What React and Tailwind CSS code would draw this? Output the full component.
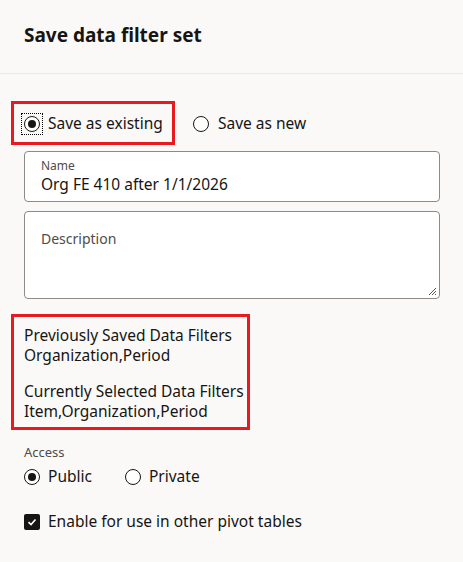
import React from "react";

function Radio({ checked, focus }) {
  return (
    <span className={focus ? "flex items-center justify-center w-[20px] h-[20px] outline-1 outline-dotted outline-black" : "flex items-center justify-center w-[20px] h-[20px]"}>
      <span className="flex items-center justify-center w-[16px] h-[16px] rounded-full border-[1.5px] border-[#161513] bg-white">
        {checked && <span className="w-[8px] h-[8px] rounded-full bg-[#161513]" />}
      </span>
    </span>
  );
}

export default function App() {
  return (
    <div className="w-[463px] h-[562px] bg-[#fbf9f8] text-[#161513] font-['Noto_Sans',sans-serif] whitespace-nowrap">
      <div className="h-[74px] border-b border-[#ebe9e6] px-6 flex items-center">
        <h1 className="text-[19px] font-bold leading-none -mt-[2px]">Save data filter set</h1>
      </div>
      <div className="pl-[11px] pr-[23px] pt-[27px]">
        <div className="flex items-center">
          <div className="flex items-center gap-[6px] border-[3px] border-[#e8191f] h-[44px] w-[164px] pl-[8px] pt-[2px]">
            <Radio checked focus />
            <span className="text-[15.5px]">Save as existing</span>
          </div>
          <div className="flex items-center gap-[7px] ml-[16px] pt-[2px]">
            <Radio />
            <span className="text-[15.5px]">Save as new</span>
          </div>
        </div>
        <div className="ml-[13px] mt-[6px] h-[51px] rounded-[4px] border border-[#8e8b87] bg-white px-4 pt-[6px]">
          <div className="text-[12px] leading-[16px] text-[#4f4c48]">Name</div>
          <div className="text-[15.5px] leading-[20px]">Org FE 410 after 1/1/2026</div>
        </div>
        <div className="relative ml-[13px] mt-[9px] h-[88px] rounded-[4px] border border-[#8e8b87] bg-white px-4 pt-[18px]">
          <div className="text-[14px] leading-[18px] text-[#4f4c48]">Description</div>
          <svg className="absolute right-[2px] bottom-[2px]" width="9" height="9" viewBox="0 0 9 9">
            <path d="M8 1 L1 8 M8 4 L4 8 M8 7 L7 8" stroke="#555" strokeWidth="1" />
          </svg>
        </div>
        <div className="mt-[15px] w-[239px] border-[3px] border-[#e8191f] pl-[10px] pt-[8px] pb-[6px] text-[15.5px] leading-[20px]">
          <div>Previously Saved Data Filters</div>
          <div>Organization,Period</div>
          <div className="mt-[16px]">Currently Selected Data Filters</div>
          <div>Item,Organization,Period</div>
        </div>
        <div className="ml-[13px] mt-[14px] text-[13px] leading-[16px] text-[#4f4c48]">Access</div>
        <div className="ml-[11px] mt-[5px] flex items-center">
          <div className="flex items-center gap-[6px]">
            <Radio checked />
            <span className="text-[15.5px]">Public</span>
          </div>
          <div className="flex items-center gap-[6px] ml-[31px]">
            <Radio />
            <span className="text-[15.5px]">Private</span>
          </div>
        </div>
        <div className="ml-[13px] mt-[22px] flex items-center gap-[8px]">
          <span className="flex items-center justify-center w-[16px] h-[16px] rounded-[2px] bg-[#161513]">
            <svg width="10" height="10" viewBox="0 0 10 10">
              <path d="M1.5 5.2 L4 7.5 L8.5 2.5" stroke="white" strokeWidth="1.6" fill="none" />
            </svg>
          </span>
          <span className="text-[15.5px]">Enable for use in other pivot tables</span>
        </div>
      </div>
    </div>
  );
}
